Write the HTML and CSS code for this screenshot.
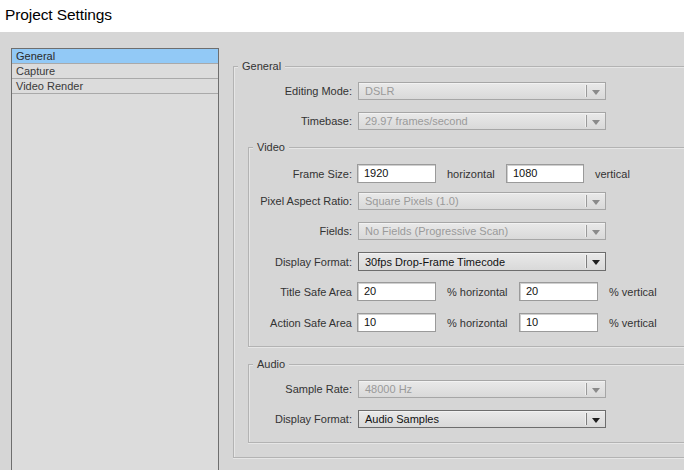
FILE: index.html
```html
<!DOCTYPE html>
<html>
<head>
<meta charset="utf-8">
<title>Project Settings</title>
<link rel="stylesheet" href="styles.css">
</head>
<body>
<div class="titlebar">Project Settings</div>
<div class="main">
  <div class="list">
    <div class="item selected">General</div>
    <div class="item">Capture</div>
    <div class="item">Video Render</div>
  </div>
  <div class="panel">
    <div class="group general">
      <span class="legend">General</span>
      <div class="row r-first">
        <span class="label">Editing Mode:</span>
        <div class="select disabled"><span class="val">DSLR</span><span class="arrow"></span></div>
      </div>
      <div class="row">
        <span class="label">Timebase:</span>
        <div class="select disabled"><span class="val">29.97 frames/second</span><span class="arrow"></span></div>
      </div>

      <div class="group sub video">
        <span class="legend">Video</span>
        <div class="row r-first tall">
          <span class="label">Frame Size:</span>
          <div class="input">1920</div>
          <span class="unit u-h">horizontal</span>
          <div class="input i2">1080</div>
          <span class="unit u-v">vertical</span>
        </div>
        <div class="row r-par">
          <span class="label">Pixel Aspect Ratio:</span>
          <div class="select disabled"><span class="val">Square Pixels (1.0)</span><span class="arrow"></span></div>
        </div>
        <div class="row">
          <span class="label">Fields:</span>
          <div class="select disabled"><span class="val">No Fields (Progressive Scan)</span><span class="arrow"></span></div>
        </div>
        <div class="row tall">
          <span class="label">Display Format:</span>
          <div class="select enabled"><span class="val">30fps Drop-Frame Timecode</span><span class="arrow"></span></div>
        </div>
        <div class="row tall r-safe">
          <span class="label">Title Safe Area</span>
          <div class="input">20</div>
          <span class="unit u-ph">% horizontal</span>
          <div class="input">20</div>
          <span class="unit u-v">% vertical</span>
        </div>
        <div class="row tall">
          <span class="label">Action Safe Area</span>
          <div class="input">10</div>
          <span class="unit u-ph">% horizontal</span>
          <div class="input">10</div>
          <span class="unit u-v">% vertical</span>
        </div>
      </div>

      <div class="group sub audio">
        <span class="legend">Audio</span>
        <div class="row r-first">
          <span class="label">Sample Rate:</span>
          <div class="select disabled"><span class="val">48000 Hz</span><span class="arrow"></span></div>
        </div>
        <div class="row">
          <span class="label">Display Format:</span>
          <div class="select enabled"><span class="val">Audio Samples</span><span class="arrow"></span></div>
        </div>
      </div>
    </div>
  </div>
</div>
</body>
</html>
```
FILE: styles.css
```css
html, body {
  margin: 0;
  padding: 0;
  width: 684px;
  height: 470px;
  overflow: hidden;
  background: #d6d6d6;
  font-family: "Liberation Sans", Arial, sans-serif;
  font-size: 11px;
  color: #333;
}

.titlebar {
  height: 32px;
  background: #ffffff;
  color: #000;
  font-size: 15.5px;
  line-height: 30px;
  padding-left: 5px;
  box-sizing: border-box;
  letter-spacing: -0.1px;
}

.main {
  display: flex;
  align-items: flex-start;
  padding: 16px 0 0 11px;
  height: 438px;
  box-sizing: border-box;
  overflow: hidden;
}

.list {
  width: 208px;
  height: 422px;
  flex: none;
  background: #dcdcdc;
  border: 1px solid #6e6e6e;
  border-bottom: none;
  box-sizing: border-box;
}

.item {
  height: 15px;
  line-height: 14px;
  padding-left: 4px;
  color: #3a3a3a;
  border-bottom: 1px solid #a9a9a9;
  box-sizing: border-box;
}

.item.selected {
  background: #92c9f6;
  color: #2a2a2a;
}

.panel {
  margin-left: 14px;
  margin-top: 18px;
  flex: 1;
  min-width: 0;
}

.group {
  position: relative;
  border: 1px solid #b3b3b3;
  border-right: none;
  box-shadow: inset 1px 1px 0 #e6e6e6, 0 1px 0 #e6e6e6;
}

.general {
  padding: 15px 0 14px 0;
}

.legend {
  position: absolute;
  top: -8px;
  left: 4px;
  padding: 0 4px;
  background: #d6d6d6;
  color: #333;
  line-height: 14px;
}

.sub {
  margin-left: 14px;
  padding: 15px 0 14px 0;
}

.video {
  margin-top: 17px;
  padding-top: 16px;
}

.audio {
  margin-top: 17px;
}

.row {
  display: flex;
  align-items: center;
  height: 18px;
  margin-top: 12px;
}

.row.r-first {
  margin-top: 0;
}

.row.tall {
  height: 19px;
}

.row.r-par {
  margin-top: 9px;
}

.row.r-safe {
  margin-top: 11px;
}

.label {
  flex: none;
  width: 118px;
  text-align: right;
  padding-right: 6px;
  box-sizing: content-box;
  white-space: nowrap;
  color: #333;
}

.sub .label {
  width: 103px;
  padding-right: 5px;
}

.select {
  position: relative;
  width: 248px;
  height: 18px;
  flex: none;
  box-sizing: border-box;
  border: 1px solid #a6a6a6;
  background: linear-gradient(#e9e9e9, #d9d9d9);
  box-shadow: inset 0 1px 0 #f2f2f2;
  display: flex;
  align-items: center;
}

.row.tall .select {
  height: 19px;
}

.sub .select {
  margin-left: 1px;
}

.select .val {
  padding-left: 6px;
  white-space: nowrap;
}

.select.disabled .val {
  color: #9a9a9a;
}

.select.enabled {
  border-color: #6d6d6d;
}

.select.enabled .val {
  color: #111;
}

.select .arrow {
  position: absolute;
  right: 0;
  top: 2px;
  bottom: 2px;
  width: 18px;
  border-left: 1px solid #7d7d7d;
  box-shadow: -1px 0 0 #f0f0f0;
}

.select .arrow::after {
  content: "";
  position: absolute;
  left: 5px;
  top: 5px;
  border-left: 4px solid transparent;
  border-right: 4px solid transparent;
  border-top: 5px solid #8a8a8a;
}

.select.disabled .arrow {
  border-left-color: #9a9a9a;
}

.select.enabled .arrow::after {
  border-top-color: #1e1e1e;
}

.input {
  width: 79px;
  height: 19px;
  box-sizing: border-box;
  background: #fff;
  border: 1px solid #9a9a9a;
  box-shadow: inset 1px 1px 0 #cfcfcf;
  color: #111;
  line-height: 17px;
  padding-left: 6px;
  flex: none;
}

.unit {
  flex: none;
  margin-left: 11px;
  white-space: nowrap;
  color: #333;
}

.u-h {
  width: 59px;
}

.u-ph {
  width: 72px;
}

.u-v {
  width: auto;
}

.input.i2 {
  width: 78px;
}
```
